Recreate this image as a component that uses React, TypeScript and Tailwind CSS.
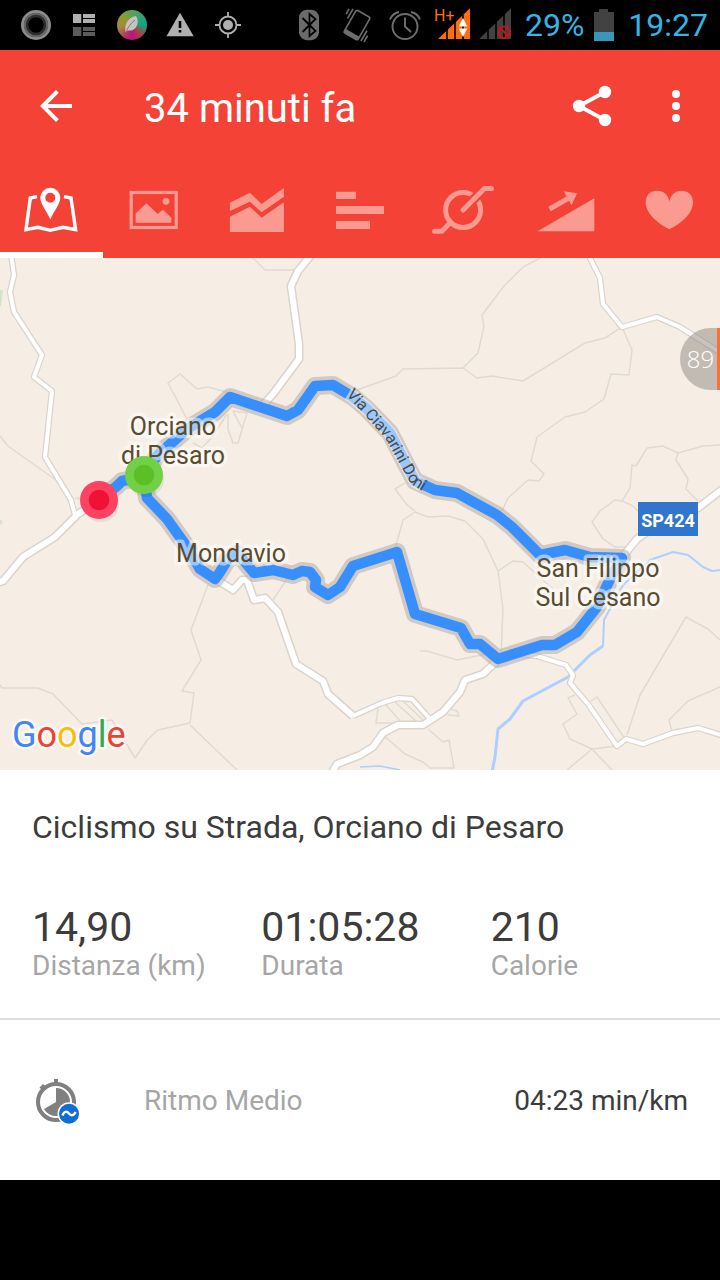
import React from 'react';

const TRACK =
  'M99 500 L117 486 L122 481 L133 479 L144 475 L157 456 L187 429 L215 412 L230 397 L287 416 L298 410 L315 386 L333 385 L353 397 L367 409 L390 433 L407 466 L415 481 L435 490 L457 493 L497 515 L512 527 L540 555 L565 550 L590 557 L622 558 L610 579 L597 607 L577 632 L555 645 L542 645 L498 659 L480 644 L470 644 L461 628 L415 614 L397 552 L353 566 L340 587 L328 595 L315 587 L316 580 L310 572 L302 571 L293 575 L273 570 L254 573 L245 562 L237 554 L228 559 L220 572 L215 579 L200 569 L187 547 L167 519 L147 498 L144 475';

const MAJOR_ROADS = [
  'M312 254 L298 271 L291 286 L299 344 L299 359 L273 394 L264 404',
  'M99 500 L78 514 L55 537 L23 557 L3 581 L-4 583',
  'M215 579 L222 583 L233 590 L242 580 L247 580 L254 600 L265 598 L278 612 L296 664 L323 681 L328 694 L353 716',
  'M331 774 L337 764 L360 755 L373 747 L383 733 L398 725 L423 725 L443 712 L460 692 L465 680 L483 674 L498 660',
  'M620 560 L637 539 L664 520 L698 508 L724 488',
];

const MINOR_ROADS = [
  'M11 254 L14 275 L10 292 L14 312 L42 355 L34 377 L52 391 L45 457 L59 480 L71 500 L75 515',
  'M353 716 L382 703 L398 698 L412 699 L430 719',
  'M520 654 L537 656 L566 665 L573 675 L570 683 L588 704 L617 746 L626 739 L643 744 L673 733 L698 728 L724 736',
  'M588 254 L600 278 L603 304 L622 327 L657 317 L680 327 L724 355',
];

const PATHS = [
  'M0 436 L8 446 L60 483',
  'M252 257 L265 270 L297 270',
  'M187 419 L168 383 L180 374 L197 389 L208 387 L230 393',
  'M227 414 L213 436 L202 448 L193 443',
  'M228 414 V429 L233 443 L238 443 L247 413 L233 411 L242 428',
  'M75 498 L90 500',
  'M354 391 L396 376 L403 369 L463 368 L477 378 L492 376 L523 381 L585 343 L605 338 L622 327',
  'M463 368 L478 353 L484 326 L482 315 L504 286 L523 267 L542 257',
  'M622 327 L632 350 L629 375 L611 374 L604 399 L585 412 L565 417 L537 437 L531 461 L544 474 L539 481 L528 480 L508 498 L502 511',
  'M405 483 L395 489 L407 505 L415 511',
  'M395 549 L403 520 L415 512 L428 517 L448 516 L465 521 L483 539 L498 571 L503 609 L501 655',
  'M498 571 L513 561 L523 562 L553 589',
  'M720 445 L703 446 L678 453 L663 446 L647 448 L636 466 L632 465 L630 488 L622 501 L615 500 L600 511 L592 522 L603 539 L615 547 L625 547',
  'M678 453 L676 460 L688 479 L686 489 L698 501',
  'M622 501 L633 506 L640 513',
  'M420 651 L427 651 L457 660 L487 654',
  'M720 640 L708 629 L686 617 L640 695 L627 735',
  'M720 687 L688 701 L669 720 L672 732',
  'M575 695 L568 698 L577 714 L563 724 L570 739 L592 749 L617 746',
  'M567 770 L592 749 L612 770',
  'M591 701 L597 697 L627 742',
  'M378 709 L376 723 L402 723 L385 704',
  'M395 702 L417 722 M403 701 L423 720',
  'M450 709 L457 711 L459 716 L448 715',
  'M428 729 L443 742 L449 740 L454 768 L430 768 L423 762 L405 754 L385 737',
  'M208 585 L191 630 L201 660 L182 691 L194 693 L190 723 L158 730 L148 739 L135 758 L112 720 L82 724 L53 694 L38 688 L2 688 L0 685',
  'M190 725 L238 771',
  'M287 579 L273 600',
];

const PLACES = [
  { name: 'Orciano', x: 173, y: 435 },
  { name: 'di Pesaro', x: 173, y: 464 },
  { name: 'Mondavio', x: 231, y: 562 },
  { name: 'San Filippo', x: 598, y: 577 },
  { name: 'Sul Cesano', x: 598, y: 606 },
];

const STATS = [
  { value: '14,90', label: 'Distanza (km)' },
  { value: '01:05:28', label: 'Durata' },
  { value: '210', label: 'Calorie' },
];

const TABS = [
  {
    label: 'Mappa',
    icon: (
      <>
        <path d="M18 18.7 L11.3 20 L7 51.7 L19 49.3 L31.3 52.3 L44 49.3 L56.6 51.7 L52 20 L45 18.7" fill="none" stroke="currentColor" strokeWidth="3.4" />
        <path fillRule="evenodd" d="M31.3 9.8 A10 10 0 0 1 41.3 19.8 C41.3 26 35 33 31.3 41.5 C27.6 33 21.3 26 21.3 19.8 A10 10 0 0 1 31.3 9.8 Z M31.3 14.8 A5 5 0 1 0 31.3 24.8 A5 5 0 1 0 31.3 14.8 Z" />
      </>
    ),
  },
  {
    label: 'Foto',
    icon: (
      <>
        <rect x="9.2" y="14.5" width="45" height="35" fill="none" stroke="currentColor" strokeWidth="3.2" />
        <path d="M13.7 44.7 V35.3 L24.4 25.3 L35.7 36 L41 31.7 L49.4 39.7 V44.7 Z" />
        <circle cx="44" cy="23.3" r="3.4" />
      </>
    ),
  },
  {
    label: 'Grafici',
    icon: (
      <>
        <path d="M4.9 24.7 L24.9 14.7 L36.6 26 L58.9 10 V18.7 L36.6 34.3 L24.9 23.7 L4.9 33 Z" />
        <path d="M4.9 38.7 L24.9 28.7 L36.6 39.7 L58.9 24.3 V54 H4.9 Z" />
      </>
    ),
  },
  {
    label: 'Parziali',
    icon: <path d="M8 13.7 H28 V21 H8 Z M8 28 H56 V36 H8 Z M8 43 H42 V51 H8 Z" />,
  },
  {
    label: 'Cadenza',
    icon: (
      <>
        <circle cx="32.1" cy="32" r="17.5" fill="none" stroke="currentColor" strokeWidth="5" />
        <path d="M38 26 L50 14" stroke="#f44336" strokeWidth="9.5" />
        <path d="M32.1 32 L53.5 10.6 H60.5 M18 46 L10.8 53.3 H3.5" fill="none" stroke="currentColor" strokeWidth="5" strokeLinecap="round" />
      </>
    ),
  },
  {
    label: 'Pendenza',
    icon: (
      <>
        <path d="M3.6 53.3 L60.3 20.3 V53.3 Z" />
        <path d="M15.5 31 L36 19.3" stroke="currentColor" strokeWidth="5" />
        <path d="M29.6 13.3 L43 15.3 L37.6 27.3 Z" />
      </>
    ),
  },
  {
    label: 'Frequenza cardiaca',
    icon: (
      <path d="M32.4 51.3 C20 45 8.7 35 8.7 24.5 C8.7 17 13.5 12.7 20 12.7 C27 12.7 31.5 17 32.4 24 C33.3 17 38 12.7 44.8 12.7 C51 12.7 56 17 56 24.5 C56 35 45 45 32.4 51.3 Z" />
    ),
  },
];

const StatusBar: React.FC = () => (
  <div className="flex h-[50px] items-center justify-between bg-black px-3 text-[32px] leading-none text-[#33b5e5]">
    <div className="flex items-center text-[#b0b0b0]">
      <svg className="size-12" viewBox="0 0 48 48" fill="none">
        <circle cx="24" cy="24" r="13.5" stroke="#8c8c8c" strokeWidth="3" />
        <circle cx="24" cy="24" r="11" stroke="#666" strokeWidth="2.5" />
        <circle cx="24" cy="24" r="9" stroke="#2e2e2e" strokeWidth="2.5" />
      </svg>
      <svg className="size-12" viewBox="0 0 48 48" fill="currentColor">
        <path d="M13 13 H21.3 V22 H13 Z M23 13 H35 V17 H23 Z M23 18 H35 V22 H23 Z" />
        <path fill="#5c5c5c" d="M13 26 H21.3 V35 H13 Z M23 26 H35 V30 H23 Z M23 31 H35 V35 H23 Z" />
      </svg>
      <div className="flex size-12 items-center justify-center">
        <div className="size-[30px] rounded-full bg-[conic-gradient(#5aa05a,#12a386_25%,#b04040_38%,#b5177f_50%,#b3306a_58%,#a8883a_72%,#8c9a30_88%,#5aa05a)]">
          <svg viewBox="0 0 30 30">
            <path d="M8.5 22 C7 15 11 7 19 6 C22.5 11 20.5 18 15 20.5 L11 20.5 Z" fill="#c4c4c4" />
            <path d="M9 22 C11 17 14 13 18 10" fill="none" stroke="#a07050" strokeWidth="1" />
          </svg>
        </div>
      </div>
      <svg className="size-12" viewBox="0 0 48 48" fill="currentColor">
        <path d="M24 11.7 L37.7 35.3 H10.5 Z" />
        <path d="M24 20 V27 M24 29 V31.5" stroke="#000" strokeWidth="2.6" />
      </svg>
      <svg className="size-12" viewBox="0 0 48 48" fill="none" stroke="currentColor">
        <circle cx="24" cy="24" r="8.5" strokeWidth="1.8" />
        <circle cx="24" cy="24" r="5" fill="currentColor" stroke="none" />
        <path d="M24 11 V15 M24 33 V37 M11 24 H15 M33 24 H37" strokeWidth="1.8" />
      </svg>
    </div>
    <div className="flex items-center text-[#6e6e6e]">
      <svg className="size-12" viewBox="0 0 48 48">
        <rect x="14" y="8.7" width="20" height="30.5" rx="8" fill="#6b6b6b" />
        <path d="M17.5 17 L30.5 30 L24.5 35 V13 L30.5 18 L17.5 31" fill="none" stroke="#000" strokeWidth="1.8" />
      </svg>
      <svg className="size-12" viewBox="0 0 48 48" fill="none" stroke="currentColor" strokeWidth="1.6">
        <g transform="rotate(30 24 24)">
          <rect x="16" y="11" width="16" height="26" rx="2" />
          <path d="M16 35 H32" strokeWidth="4" />
          <path d="M12.5 12 V23 M9 14 V20 M35.5 24 V36 M38.5 28 V35" />
        </g>
      </svg>
      <svg className="size-12" viewBox="0 0 48 48" fill="none" stroke="currentColor" strokeWidth="1.9">
        <circle cx="24" cy="25.5" r="12.5" />
        <path d="M24 16.5 V25.5 L30 31 M9 18.5 C10.5 14.5 13.5 12 18 11 M39 18.5 C37.5 14.5 34.5 12 30 11" />
      </svg>
      <svg className="h-12 w-[84px]" viewBox="0 0 84 48">
        <text x="5" y="20" fontSize="16" fill="#ff6d0d">H+</text>
        <path d="M9 38 L41 7.3 V38 Z" fill="#ff6d0d" />
        <path d="M50 38 L82 7.3 V38 Z" fill="#424242" />
        <path d="M18 23 V38 M26 18 V38 M34 14 V38 M59 8 V38 M67 8 V38 M75 8 V38" stroke="#000" strokeWidth="1.6" />
        <path d="M29.7 25.5 L34 17 L38.3 25.5 Z M29.7 27.5 H38.3 L34 36 Z" fill="#fff" />
        <circle cx="75.3" cy="31.3" r="5.8" fill="none" stroke="#c81414" strokeWidth="2" />
        <path d="M71.3 27.3 L79.3 35.3" stroke="#c81414" strokeWidth="2" />
      </svg>
      <span className="ml-3 text-[#33b5e5]">29%</span>
      <svg className="mr-3.5 ml-2.5 h-8 w-5" viewBox="0 0 20 32">
        <path d="M5 0 H14 V3 H20 V32 H0 V3 H5 Z" fill="#424242" />
        <path d="M0 23 H20 V32 H0 Z" fill="#3a97bc" />
      </svg>
      <span className="text-[#33b5e5]">19:27</span>
    </div>
  </div>
);

const Header: React.FC = () => (
  <header className="bg-[#f44336] text-white">
    <div className="flex h-28 items-center pr-5 pl-8">
      <button type="button" aria-label="Indietro" className="size-12">
        <svg className="size-12" viewBox="0 0 24 24" fill="currentColor">
          <path d="M20 11H7.83l5.59-5.59L12 4l-8 8 8 8 1.41-1.41L7.83 13H20v-2z" />
        </svg>
      </button>
      <h1 className="ml-16 flex-1 pt-1.5 text-[40px] leading-none">34 minuti fa</h1>
      <button type="button" aria-label="Condividi" className="mr-9 size-12">
        <svg className="size-12" viewBox="0 0 48 48" fill="currentColor">
          <path d="M37 10 L11 24 L37 38" fill="none" stroke="currentColor" strokeWidth="4" />
          <circle cx="37" cy="10" r="6.2" />
          <circle cx="11" cy="24" r="6.2" />
          <circle cx="37" cy="38" r="6.2" />
        </svg>
      </button>
      <button type="button" aria-label="Altre opzioni" className="size-12">
        <svg className="size-12" viewBox="0 0 48 48" fill="currentColor">
          <circle cx="24" cy="12" r="4" />
          <circle cx="24" cy="24" r="4" />
          <circle cx="24" cy="36" r="4" />
        </svg>
      </button>
    </div>
    <nav className="grid grid-cols-7">
      {TABS.map((tab, idx) => (
        <button
          key={tab.label}
          type="button"
          aria-label={tab.label}
          className={
            idx === 0
              ? 'flex h-24 items-center justify-center border-b-6 border-white pt-[6px] text-white'
              : 'flex h-24 items-center justify-center text-[#fa9a91]'
          }
        >
          <svg className="size-16" viewBox="0 0 64 64" fill="currentColor">
            {tab.icon}
          </svg>
        </button>
      ))}
    </nav>
  </header>
);

const RouteMap: React.FC = () => (
  <section className="relative overflow-hidden bg-[#f6eee5]">
    <svg className="block w-full" viewBox="0 258 720 512" fill="none" strokeLinejoin="round">
      <path d="M0 290 L3 290 L1 306 L0 306 Z M0 519 L3 522 L0 525 Z" fill="#cfe5c5" />
      <g stroke="#e0dad0" strokeWidth="1.5">
        {PATHS.map((d) => (
          <path key={d} d={d} />
        ))}
      </g>
      <path d="M492 772 L495 757 L498 729 L510 719 L523 701 L568 677 L590 655 L603 646" stroke="#adcfff" strokeWidth="3" />
      <path d="M603 646 L604 620 L623 585 L650 560 L673 552 L688 555 L703 567 L712 571 L720 570" stroke="#adcfff" strokeWidth="2" />
      <path d="M360 767 L380 766 L400 770" stroke="#adcfff" strokeWidth="1.5" />
      <g stroke="#dcd3cb">
        {MINOR_ROADS.map((d) => (
          <path key={d} d={d} strokeWidth="6.5" />
        ))}
        {MAJOR_ROADS.map((d) => (
          <path key={d} d={d} strokeWidth="9" />
        ))}
      </g>
      <g stroke="#fff">
        {MINOR_ROADS.map((d) => (
          <path key={d} d={d} strokeWidth="4" />
        ))}
        {MAJOR_ROADS.map((d) => (
          <path key={d} d={d} strokeWidth="6" />
        ))}
      </g>

      <path d={TRACK} stroke="#b4aca5" strokeOpacity="0.55" strokeWidth="18" />
      <path d={TRACK} stroke="#378ffd" strokeWidth="10.5" />

      {/* street name runs along the track */}
      <path d="M348 394 L353 397 L367 409 L390 433 L407 466 L415 481 L422 485" stroke="#fff" strokeOpacity="0.5" strokeWidth="13" />
      <path id="street" d="M346 395 L363 413 L385 438 L402 468 L411 484 L430 496" />
      <text fontSize="16" fill="#4d4a40">
        <textPath href="#street">Via Ciavarini Doni</textPath>
      </text>

      <g fontSize="25" fill="#5a4c2c" stroke="#fff" strokeOpacity="0.5" strokeWidth="7" paintOrder="stroke" textAnchor="middle">
        {PLACES.map((place) => (
          <text key={place.name} x={place.x} y={place.y}>
            {place.name}
          </text>
        ))}
      </g>

      <rect x="638" y="502" width="60" height="34" fill="#3175cc" />
      <text x="668" y="527" fontSize="18" fontWeight="700" fill="#fff" textAnchor="middle">SP424</text>

      <ellipse cx="101" cy="504" rx="18" ry="18" fill="#000" fillOpacity="0.07" />
      <circle cx="99" cy="500" r="19" fill="#ff4262" />
      <circle cx="99" cy="500" r="10.3" fill="#f01136" />
      <ellipse cx="146" cy="479" rx="18" ry="18" fill="#000" fillOpacity="0.07" />
      <circle cx="144" cy="475" r="19" fill="#72d046" />
      <circle cx="144" cy="475" r="10.3" fill="#5bbf28" />

      <text x="12" y="747" fontSize="36" stroke="#fff" strokeOpacity="0.6" strokeWidth="5" paintOrder="stroke">
        <tspan fill="#4285f4">G</tspan>
        <tspan fill="#ea4335">o</tspan>
        <tspan fill="#fbbc05">o</tspan>
        <tspan fill="#4285f4">g</tspan>
        <tspan fill="#34a853">l</tspan>
        <tspan fill="#ea4335">e</tspan>
      </text>
    </svg>
    <button
      type="button"
      className="absolute top-[70px] right-0 flex h-[62px] w-10 items-center justify-center rounded-l-full border-r-3 border-[#ff6e33] bg-[#8d8782]/50 pl-1 font-['Open_Sans',sans-serif] text-2xl font-light text-white"
    >
      89
    </button>
  </section>
);

const App: React.FC = () => {
  return (
    <div className="min-h-screen bg-black font-[Roboto,sans-serif]">
      <StatusBar />
      <Header />
      <RouteMap />
      <main className="bg-white text-[#3c3c3c]">
        <section className="border-b-2 border-[#dedede] pt-9 pb-9 pl-8">
          <h2 className="text-[32px] leading-[42px]">Ciclismo su Strada, Orciano di Pesaro</h2>
          <dl className="mt-14 grid grid-cols-3">
            {STATS.map((stat) => (
              <div key={stat.label} className="flex flex-col-reverse">
                <dt className="text-[28px] leading-8 text-[#a6a6a6]">{stat.label}</dt>
                <dd className="text-[41px] leading-[46px]">{stat.value}</dd>
              </div>
            ))}
          </dl>
        </section>
        <section className="flex h-40 items-center px-8 pt-0.5 text-[28px]">
          <svg className="size-12" viewBox="0 0 48 48">
            <path d="M22 2 H26 V6 H22 Z M7.5 10.5 L11 7 L14 10 L10.5 13.5 Z" fill="#808080" />
            <circle cx="24" cy="25" r="18" fill="none" stroke="#808080" strokeWidth="4" />
            <path d="M24 25 V11 A14 14 0 1 1 12 32 Z" fill="#808080" />
            <circle cx="37" cy="36.7" r="11.5" fill="#fff" />
            <circle cx="37" cy="36.7" r="10" fill="#0f6fd0" />
            <path d="M30.5 38.5 C32 34 35 34 37 36.5 C39 39 42 39 43.5 34.8" fill="none" stroke="#fff" strokeWidth="2.4" />
          </svg>
          <span className="ml-16 flex-1 text-[#a6a6a6]">Ritmo Medio</span>
          <span>04:23 min/km</span>
        </section>
      </main>
    </div>
  );
};

export default App;
